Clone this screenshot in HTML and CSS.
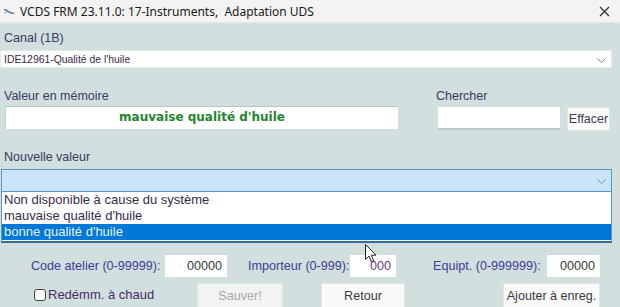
FILE: index.html
```html
<!DOCTYPE html>
<html lang="fr">
<head>
<meta charset="utf-8">
<title>VCDS Adaptation</title>
<link rel="stylesheet" href="styles.css">
</head>
<body>
<div class="titlebar">
  <svg class="app-icon" width="12" height="8" viewBox="0 0 12 8"><path d="M1 2 C3 1 4 3 6 4 C8 5 9 6 11 5" fill="none" stroke="#5a7fa8" stroke-width="1.6"/><path d="M1 5 L4 4" stroke="#9aaec2" stroke-width="1.2"/></svg>
  <span class="title">VCDS FRM 23.11.0: 17-Instruments,&nbsp; Adaptation UDS</span>
  <svg class="close" width="11" height="11" viewBox="0 0 11 11"><path d="M1 1 L10 10 M10 1 L1 10" stroke="#333" stroke-width="1.3"/></svg>
</div>
<div class="main">
  <div class="label canal-label">Canal (1B)</div>
  <div class="combo combo-canal">
    <span class="combo-text">IDE12961-Qualité de l'huile</span>
    <svg class="chev" width="9" height="5" viewBox="0 0 9 5"><path d="M0.5 0.5 L4.5 4.5 L8.5 0.5" fill="none" stroke="#8a8a8a" stroke-width="1"/></svg>
  </div>

  <div class="row-memo">
    <div class="memo-group">
      <div class="label">Valeur en mémoire</div>
      <div class="field memo-field">mauvaise qualité d'huile</div>
    </div>
    <div class="search-group">
      <div class="label search-label">Chercher</div>
      <div class="search-row">
        <div class="field search-field"></div>
        <div class="btn btn-effacer">Effacer</div>
      </div>
    </div>
  </div>

  <div class="label nouvelle-label">Nouvelle valeur</div>
  <div class="combo combo-new">
    <svg class="chev" width="9" height="5" viewBox="0 0 9 5"><path d="M0.5 0.5 L4.5 4.5 L8.5 0.5" fill="none" stroke="#7a8a9a" stroke-width="1"/></svg>
  </div>
  <ul class="list">
    <li>Non disponible à cause du système</li>
    <li>mauvaise qualité d'huile</li>
    <li class="selected">bonne qualité d'huile</li>
  </ul>

  <div class="row-codes">
    <span class="clabel cl-code">Code atelier (0-99999):</span>
    <span class="num num-code">00000</span>
    <span class="clabel cl-imp">Importeur (0-999):</span>
    <span class="num num-imp">000</span>
    <span class="clabel cl-eq">Equipt. (0-999999):</span>
    <span class="num num-eq">00000</span>
  </div>

  <div class="row-buttons">
    <label class="check"><span class="box"></span><span class="check-text">Redémm. à chaud</span></label>
    <div class="btn btn-big btn-sauver">Sauver!</div>
    <div class="btn btn-big btn-retour">Retour</div>
    <div class="btn btn-big btn-ajouter">Ajouter à enreg.</div>
  </div>
</div>
<svg class="cursor" width="13" height="20" viewBox="0 0 13 20"><path d="M0.5 0.5 L0.5 15.5 L4 12 L6.5 18 L8.8 17 L6.3 11.2 L11 11.2 Z" fill="#fff" stroke="#222" stroke-width="1"/></svg>
</body>
</html>
```
FILE: styles.css
```css
* { box-sizing: border-box; }
body {
  margin: 0;
  width: 620px;
  height: 307px;
  overflow: hidden;
  position: relative;
  background: #d1dfdf;
  font-family: "Liberation Sans", Arial, sans-serif;
  color: #3b3a60;
}
.titlebar {
  height: 23px;
  background: #f3f3f3;
  display: flex;
  align-items: center;
  padding-left: 3px;
  border-bottom: 1px solid #e2e8e8;
}
.app-icon { margin-right: 5px; margin-top: 1px; }
.title {
  font-family: "Noto Sans", "Open Sans", sans-serif;
  font-size: 12px;
  color: #1a1a1a;
  flex: 1;
}
.close { margin-right: 10px; }

.main { padding: 0; }

.label {
  font-size: 12.5px;
  line-height: 15px;
  height: 15px;
  padding-left: 4px;
  color: #3b3a60;
}
.canal-label { margin-top: 8px; }

.combo {
  position: relative;
  display: flex;
  align-items: center;
}
.combo .chev { position: absolute; }
.combo-canal {
  margin-top: 4px;
  width: 612px;
  height: 18px;
  background: #fff;
  border: 1px solid #e4e9e9;
}
.combo-canal .chev { right: 5px; top: 7px; }
.combo-text {
  font-size: 10.4px;
  padding-left: 3px;
  color: #3a2a4a;
}

.row-memo {
  display: flex;
  margin-top: 21px;
}
.memo-group { width: 436px; }
.memo-group .label { padding-left: 4px; }
.field {
  background: #fff;
  height: 23px;
}
.memo-field {
  margin-top: 2px;
  margin-left: 5px;
  width: 393px;
  border-top: 1px solid #b9c2c2;
  border-left: 1px solid #c8d0d0;
  font-family: "DejaVu Sans", Verdana, sans-serif;
  font-weight: bold;
  font-size: 12px;
  color: #23862f;
  text-align: center;
  line-height: 21px;
}
.search-label { padding-left: 0; }
.search-row {
  display: flex;
  margin-top: 3px;
}
.search-field {
  margin-left: 2px;
  width: 122px;
  border-bottom: 2px solid #bcc6c6;
}
.btn {
  background: #fafafa;
  border: 1px solid #e0e6e6;
  text-align: center;
  color: #3b3a60;
}
.btn-effacer {
  margin-left: 7px;
  width: 43px;
  height: 24px;
  font-size: 12.5px;
  line-height: 23px;
}

.nouvelle-label { margin-top: 19px; }
.combo-new {
  margin-top: 4px;
  margin-left: 1px;
  width: 611px;
  height: 23px;
  background: #cce4f7;
  border: 1px solid #5a95c8;
}
.combo-new .chev { right: 5px; top: 9px; }

.list {
  list-style: none;
  margin: 0 0 0 1px;
  padding: 0;
  width: 611px;
  height: 51px;
  background: #fff;
  border-left: 1px solid #5a95c8;
  border-right: 1px solid #5a95c8;
  border-bottom: 2px solid #3a6d9a;
}
.list li {
  height: 16px;
  line-height: 16px;
  font-size: 13px;
  padding-left: 2px;
  color: #3a2a4a;
}
.list li.selected {
  background: #0078d7;
  color: #e8f2fb;
}

.row-codes {
  display: flex;
  align-items: center;
  margin-top: 12px;
  height: 22px;
}
.clabel {
  font-size: 12.6px;
  color: #3e3c98;
  white-space: nowrap;
}
.cl-code { margin-left: 31px; width: 134px; }
.cl-imp { margin-left: 21px; width: 102px; }
.cl-eq { margin-left: 37px; width: 114px; }
.num {
  background: #fff;
  height: 22px;
  line-height: 22px;
  font-size: 12.6px;
  text-align: right;
  padding-right: 5px;
  color: #2f3f34;
}
.num-code { width: 62px; }
.num-imp { width: 46px; color: #6a3a7a; }
.num-eq { width: 53px; }

.row-buttons {
  display: flex;
  align-items: flex-start;
  margin-top: 6px;
}
.check {
  display: flex;
  align-items: center;
  margin-left: 34px;
  margin-top: 4px;
  width: 163px;
}
.box {
  width: 12px;
  height: 12px;
  border: 1px solid #444;
  border-radius: 3px;
  background: #fff;
  margin-right: 2px;
}
.check-text {
  font-size: 13px;
  color: #4a2d6a;
}
.btn-big {
  height: 26px;
  font-size: 12.6px;
  line-height: 24px;
}
.btn-sauver { width: 86px; color: #a4a8a8; background: #f2f4f4; }
.btn-retour { width: 84px; margin-left: 38px; color: #3a3a40; }
.btn-ajouter { width: 97px; margin-left: 98px; color: #3a3a40; }

.cursor {
  position: absolute;
  left: 365px;
  top: 244px;
}
```
